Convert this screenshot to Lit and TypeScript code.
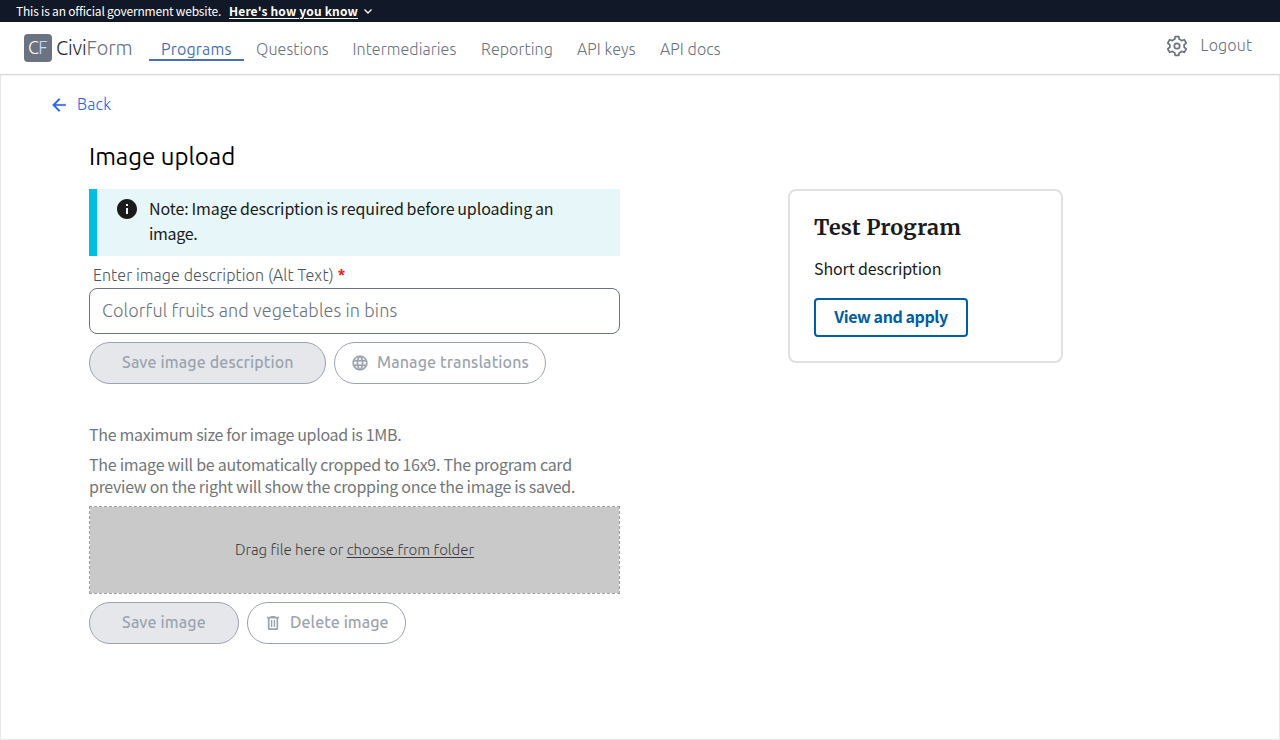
import { LitElement, html, css } from "lit";
import { customElement } from "lit/decorators.js";

@customElement("app-root")
export class AppRoot extends LitElement {
  static styles = css`
    :host { display: flex; flex-direction: column; height: 740px; background: #fff; overflow: hidden;
      --ui: "Ubuntu", "Open Sans", "Noto Sans", sans-serif;
      --body: "Source Sans Pro", "Noto Sans CJK SC", sans-serif;
      font-family: var(--ui); font-weight: 300; }
    * { box-sizing: border-box; }
    p, h1, h2 { margin: 0; font-weight: inherit; }
    a { color: inherit; text-decoration: none; }
    span, a, p, h1, h2, button { white-space: nowrap; }
    svg { display: block; flex: none; }
    .gov { height: 22px; flex: none; background: #111827; color: #fff; display: flex; align-items: center; padding-left: 16px; font: 400 12px/22px var(--body); }
    .gov .lead { width: 213px; letter-spacing: -.2px; }
    .gov .know { width: 134px; font-weight: 700; letter-spacing: .16px; text-decoration: underline; text-underline-offset: 2px; }
    header { height: 52px; flex: none; display: flex; padding-left: 24px; color: #6b7280; box-shadow: 0 1px 2px rgba(0,0,0,.1); position: relative; background: #fff; }
    .logo { width: 28px; height: 28px; margin-top: 12px; border-radius: 4px; background: #6b7280; color: #fff; font-size: 18px; line-height: 27px; padding-left: 4px; letter-spacing: -.8px; }
    .logo i { font-style: normal; color: #bfdbfe; }
    .brand { width: 93px; margin-left: 4px; margin-top: 12px; font-size: 20px; line-height: 28px; letter-spacing: -.15px; }
    .brand b { font-weight: 300; color: #1f2937; }
    nav { display: flex; margin-top: 16px; font-size: 16px; line-height: 22px; height: 23px; letter-spacing: .08px; }
    nav a { padding-left: 12px; }
    .programs { width: 95px; color: #4a6fb5; font-weight: 400; letter-spacing: .16px; border-bottom: 2px solid #4a6fb5; }
    .questions { width: 96.5px; } .intermediaries { width: 128.5px; } .reporting { width: 96px; } .keys { width: 83px; } .docs { width: 85px; }
    .right { margin-left: auto; width: 115px; display: flex; }
    .right svg { margin-top: 12px; }
    .right span { margin: 12px 0 0 11.5px; font-size: 16px; line-height: 22px; letter-spacing: .15px; }
    main { flex: 1; border: 1px solid #e5e7eb; padding: 16px 0 0 48px; }
    .back { display: flex; align-items: center; color: #2563eb; height: 26px; font-size: 16px; gap: 8px; letter-spacing: .2px; }
    .back svg { margin-top: 2px; }
    .cols { display: flex; padding-left: 40px; margin-top: 22px; }
    .left { width: 531px; }
    h1 { font-size: 24px; line-height: 36px; color: #000; font-weight: 400; }
    .note { margin-top: 14px; height: 67px; background: #e7f6f8; border-left: 8px solid #00bde3; padding: 7px 0 0 20px; display: flex; gap: 12px; color: #1b1b1b; font: 400 16px/25px var(--body); }
    .note svg { margin-top: 3px; }
    .n1 { letter-spacing: -.1px; word-spacing: -.62px; } .n2 { letter-spacing: -.3px; }
    .label { margin-top: 9px; padding-left: 4px; height: 23px; font-size: 16px; line-height: 21px; color: #4b5563; letter-spacing: .1px; }
    .label b { color: #dc2626; font-weight: 700; }
    .input { height: 46px; border: 1px solid #6b7280; border-radius: 8px; padding-left: 12px; font-size: 18px; line-height: 43px; color: #6b7280; letter-spacing: .11px; }
    .btns { display: flex; gap: 8px; margin-top: 8px; }
    button { height: 42px; border-radius: 21px; border: 1px solid #9ca3af; background: #fff; color: #9ca3af; font: 500 16px/24px var(--ui); letter-spacing: .13px; padding: 0 0 2px; display: flex; align-items: center; justify-content: flex-start; }
    button svg { margin-top: 2px; }
    .fill { background: #e5e7eb; padding-left: 32px; }
    .line { padding-left: 16px; gap: 8px; }
    .w1 { width: 237px; } .w2 { width: 212px; } .w3 { width: 150px; } .w4 { width: 159px; letter-spacing: .08px; }
    .hint { font: 400 16px/22px var(--body); color: #71767a; letter-spacing: -.31px; }
    .c1 { letter-spacing: -.265px; } .c2 { letter-spacing: -.29px; }
    .max { margin-top: 39px; }
    .crop { margin-top: 8px; }
    .drop { margin-top: 9px; height: 88px; border: 1px dashed #a0a0a0; background: #c9c9c9; background-clip: padding-box; color: #3d3d3d; font-size: 15px; line-height: 86px; text-align: center; }
    .drop u { text-underline-offset: 2px; }
    .card { width: 275px; height: 174px; margin: 50px 0 0 168px; border: 2px solid #dfe1e2; border-radius: 8px; padding: 21px 0 0 24px; color: #1b1b1b; font: 400 16px/24px var(--body); }
    .card h2 { font: 700 21.5px/32px "Merriweather", "DejaVu Serif Condensed", "DejaVu Serif", serif; letter-spacing: .18px; }
    .card p { margin-top: 12px; letter-spacing: -.12px; }
    .view { margin-top: 18px; width: 154px; height: 39px; border: 2px solid #005ea2; border-radius: 4px; color: #005ea2; font: 700 16px/33px var(--body); letter-spacing: -.42px; text-align: center; display: block; }
  `;

  render() {
    return html`
      <div class="gov"><span class="lead">This is an official government website.</span><a class="know">Here's how you know</a>
        <svg width="10" height="10" viewBox="0 0 10 10" fill="none" stroke="#fff" stroke-width="1.3"><path d="M1.5 3.5 5 7l3.5-3.5"/></svg></div>
      <header>
        <div class="logo">C<i>F</i></div>
        <div class="brand"><b>Civi</b>Form</div>
        <nav><a class="programs">Programs</a><a class="questions">Questions</a><a class="intermediaries">Intermediaries</a><a class="reporting">Reporting</a><a class="keys">API keys</a><a class="docs">API docs</a></nav>
        <div class="right">
          <svg width="24" height="24" viewBox="0 0 24 24" fill="none" stroke="#6b7280" stroke-width="1.7" stroke-linejoin="round"><path d="M10.2 2.7h3.6l.5 2.6q1.3.4 2.3 1.3l2.7-.9 1.9 3.3-2.1 1.8q.2 1.2 0 2.4l2.1 1.8-1.9 3.3-2.7-.9q-1 .9-2.3 1.3l-.5 2.6h-3.6l-.5-2.6q-1.3-.4-2.3-1.3l-2.7.9-1.9-3.3 2.1-1.8q-.2-1.2 0-2.4L2.8 9l1.9-3.3 2.7.9q1-.9 2.3-1.3z"/><circle cx="12" cy="12" r="2.7"/></svg>
          <span>Logout</span>
        </div>
      </header>
      <main>
        <a class="back"><svg width="20" height="20" viewBox="0 0 24 24" fill="#2563eb" stroke="#2563eb" stroke-width=".3"><path d="M20 11H7.83l5.59-5.59L12 4l-8 8 8 8 1.41-1.41L7.83 13H20v-2z"/></svg><span>Back</span></a>
        <div class="cols">
          <section class="left">
            <h1><span>Image upload</span></h1>
            <div class="note">
              <svg width="20" height="20" viewBox="2 2 20 20" fill="#1b1b1b"><path d="M12 2C6.48 2 2 6.48 2 12s4.48 10 10 10 10-4.48 10-10S17.52 2 12 2zm1 15h-2v-6h2v6zm0-8h-2V7h2v2z"/></svg>
              <p><span class="n1">Note: Image description is required before uploading an</span><br><span class="n2">image.</span></p>
            </div>
            <p class="label"><span>Enter image description (Alt Text)</span> <b>*</b></p>
            <div class="input"><span>Colorful fruits and vegetables in bins</span></div>
            <div class="btns"><button class="fill w1"><span>Save image description</span></button>
              <button class="line w2"><svg width="18" height="18" viewBox="0 0 24 24" fill="#9ca3af" stroke="#9ca3af" stroke-width=".35"><path d="M11.99 2C6.47 2 2 6.48 2 12s4.47 10 9.99 10C17.52 22 22 17.52 22 12S17.52 2 11.99 2zm6.93 6h-2.95c-.32-1.25-.78-2.45-1.38-3.56 1.84.63 3.37 1.91 4.33 3.56zM12 4.04c.83 1.2 1.48 2.53 1.91 3.96h-3.82c.43-1.43 1.08-2.76 1.91-3.96zM4.26 14C4.1 13.36 4 12.69 4 12s.1-1.36.26-2h3.38c-.08.66-.14 1.32-.14 2 0 .68.06 1.34.14 2H4.26zm.82 2h2.95c.32 1.25.78 2.45 1.38 3.56-1.84-.63-3.37-1.9-4.33-3.56zm2.95-8H5.08c.96-1.66 2.49-2.93 4.33-3.56C8.81 5.55 8.35 6.75 8.03 8zM12 19.96c-.83-1.2-1.48-2.53-1.91-3.96h3.82c-.43 1.43-1.08 2.76-1.91 3.96zM14.34 14H9.66c-.09-.66-.16-1.32-.16-2 0-.68.07-1.35.16-2h4.68c.09.65.16 1.32.16 2 0 .68-.07 1.34-.16 2zm.25 5.56c.6-1.11 1.06-2.31 1.38-3.56h2.95c-.96 1.65-2.49 2.93-4.33 3.56zM16.36 14c.08-.66.14-1.32.14-2 0-.68-.06-1.34-.14-2h3.38c.16.64.26 1.31.26 2s-.1 1.36-.26 2h-3.38z"/></svg><span>Manage translations</span></button></div>
            <p class="hint max"><span>The maximum size for image upload is 1MB.</span></p>
            <p class="hint crop"><span class="c1">The image will be automatically cropped to 16x9. The program card</span><br><span class="c2">preview on the right will show the cropping once the image is saved.</span></p>
            <div class="drop"><span>Drag file here or <u>choose from folder</u></span></div>
            <div class="btns"><button class="fill w3"><span>Save image</span></button>
              <button class="line w4"><svg width="18" height="18" viewBox="0 0 18 18" fill="none" stroke="#9ca3af" stroke-linejoin="round"><path stroke-width="1.7" d="M3 3.6h12M6.7 2.8h4.6M4.7 4v11.1h8.6V4"/><path stroke-width="1.4" d="M7.6 6v7M10.4 6v7"/></svg><span>Delete image</span></button></div>
          </section>
          <aside class="card">
            <h2><span>Test Program</span></h2>
            <p><span>Short description</span></p>
            <a class="view"><span>View and apply</span></a>
          </aside>
        </div>
      </main>`;
  }
}
